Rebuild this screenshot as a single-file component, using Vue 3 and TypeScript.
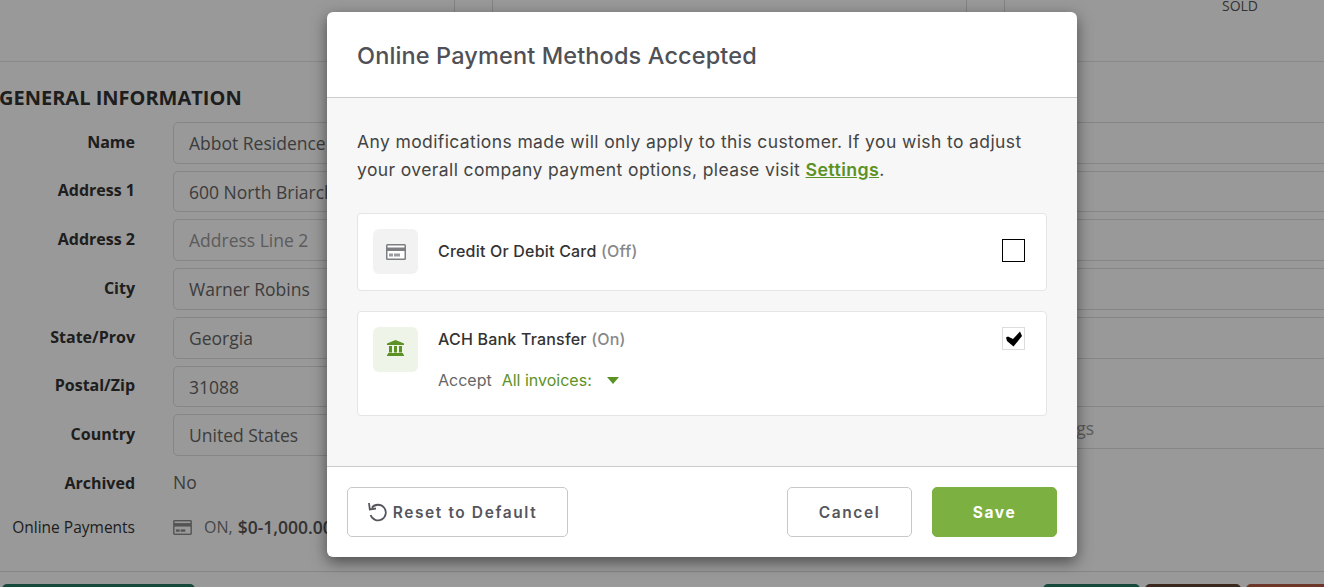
<script setup lang="ts">
const leftRows: { label: string; value: string; placeholder?: boolean }[] = [
  { label: 'Name', value: 'Abbot Residence' },
  { label: 'Address 1', value: '600 North Briarcliff Road' },
  { label: 'Address 2', value: 'Address Line 2', placeholder: true },
  { label: 'City', value: 'Warner Robins' },
  { label: 'State/Prov', value: 'Georgia' },
  { label: 'Postal/Zip', value: '31088' },
  { label: 'Country', value: 'United States' },
]
</script>

<template>
  <div class="page">
    <div class="topbar">
      <div class="cell c1"></div>
      <div class="cell c2"></div>
      <div class="cell c3"></div>
      <div class="cell c4"></div>
      <div class="sold">SOLD</div>
    </div>

    <div class="content">
      <section class="left">
        <h2 class="section-title">GENERAL INFORMATION</h2>
        <div v-for="row in leftRows" :key="row.label" class="form-row">
          <label class="form-label">{{ row.label }}</label>
          <div class="field" :class="{ ph: row.placeholder }">{{ row.value }}</div>
        </div>
        <div class="form-row plain archived">
          <label class="form-label">Archived</label>
          <div class="plain-value">No</div>
        </div>
        <div class="form-row plain payments">
          <label class="form-label light">Online Payments</label>
          <div class="pay-value">
            <svg class="pay-icon" viewBox="0 0 20 16" width="19" height="15">
              <rect width="20" height="16" rx="1.500" fill="#8c8c8c" />
              <rect x="1.500" y="1.500" width="17" height="1.800" fill="#fff" />
              <rect x="1.500" y="7" width="17" height="7.500" fill="#fff" />
              <rect x="3" y="10" width="4" height="2.500" fill="#8c8c8c" />
              <rect x="8" y="10" width="5" height="2.500" fill="#8c8c8c" />
            </svg>
            <span class="on">ON,</span>
            <span class="range">$0-1,000.00</span>
          </div>
        </div>
      </section>

      <section class="right">
        <div class="field wide"></div>
        <div class="field wide"></div>
        <div class="field wide"></div>
        <div class="field wide"></div>
        <div class="field wide"></div>
        <div class="field wide tags">Tags</div>
      </section>
    </div>

    <div class="actions">
      <div class="act green-dark"></div>
      <div class="act-spacer"></div>
      <div class="act green"></div>
      <div class="act brown"></div>
      <div class="act red"></div>
    </div>

    <div class="overlay"></div>

    <div class="modal" role="dialog">
      <header class="modal-head">
        <h3 class="modal-title">Online Payment Methods Accepted</h3>
      </header>
      <div class="modal-body">
        <p class="intro">
          Any modifications made will only apply to this customer. If you wish to adjust your overall company payment options, please visit
          <a class="link">Settings</a>.
        </p>

        <div class="method">
          <div class="method-icon grey">
            <svg viewBox="0 0 20 16" width="20" height="16">
              <rect width="20" height="16" rx="1.500" fill="#7d7e82" />
              <rect x="1.500" y="1.500" width="17" height="2" fill="#fff" />
              <rect x="1.500" y="7" width="17" height="7.500" fill="#fff" />
              <rect x="3" y="9.500" width="4" height="3" fill="#9a9b9e" />
              <rect x="8" y="9.500" width="6" height="3" fill="#9a9b9e" />
            </svg>
          </div>
          <div class="method-main">
            <div class="method-title">Credit Or Debit Card <span class="state">(Off)</span></div>
          </div>
          <span class="check off"></span>
        </div>

        <div class="method second">
          <div class="method-icon pale">
            <svg class="bank" viewBox="0 0 17 16" width="17" height="16">
              <path fill="#5c9225" d="M8.500 0 17 3.500V5H0V3.500zM2 6h3v6.500H2zM7 6h3v6.500H7zM12 6h3v6.500h-3zM1 13h15v1.500H1zM0 14.500h17V16H0z" />
            </svg>
          </div>
          <div class="method-main">
            <div class="method-title">ACH Bank Transfer <span class="state">(On)</span></div>
            <div class="accept">
              <span class="accept-label">Accept</span>
              <span class="accept-value">All invoices:</span>
              <span class="caret"></span>
            </div>
          </div>
          <span class="check on-box">
            <svg viewBox="0 0 16 16" width="16" height="16">
              <path fill="#000" d="M0 6.500 2 5.500 7 8 14 0.500 16 5 7.500 15.500 1 10z" />
            </svg>
          </span>
        </div>
      </div>
      <footer class="modal-foot">
        <button class="btn reset" type="button">
          <svg viewBox="0 0 20 20" width="20" height="20" fill="none" stroke="#55565c" stroke-width="1.800">
            <path d="M3.900 5.700A7.800 7.800 0 1 1 2.600 13" />
            <path d="M1 1 1.800 7.500 8 6.500" />
          </svg>
          Reset to Default
        </button>
        <div class="foot-right">
          <button class="btn cancel" type="button">Cancel</button>
          <button class="btn save" type="button">Save</button>
        </div>
      </footer>
    </div>
  </div>
</template>

<style scoped>
.page {
  position: relative;
  width: 1324px;
  height: 587px;
  overflow: hidden;
  background: #fff;
  font-family: "Open Sans", sans-serif;
  color: #333;
}
.topbar {
  display: flex;
  height: 61px;
  border-bottom: 1px solid #e4e4e4;
  box-sizing: content-box;
}
.cell { border-right: 1px solid #ddd; }
.c1 { width: 454px; }
.c2 { width: 37px; }
.c3 { width: 473px; }
.c4 { width: 37px; }
.sold {
  margin-left: 217px;
  font-size: 14px;
  line-height: 12px;
  height: 12px;
  color: #555;
}
.content {
  display: flex;
  height: 509px;
  border-bottom: 1px solid #e0e0e0;
}
.left { width: 1000px; flex: none; }
.section-title {
  margin: 0 0 0 -1px;
  padding-top: 21px;
  height: 59.900px;
  box-sizing: border-box;
  font-size: 20px;
  line-height: 30px;
  font-weight: 700;
  color: #333;
}
.form-row {
  display: flex;
  align-items: center;
  height: 41.750px;
  margin-bottom: 7px;
}
.form-label {
  width: 135px;
  flex: none;
  text-align: right;
  font-size: 16px;
  font-weight: 700;
  color: #333;
  margin-top: -2.500px;
}
.field {
  box-sizing: border-box;
  height: 100%;
  border: 1px solid #e0e0e0;
  border-radius: 5px;
  margin-left: 38px;
  padding-left: 15px;
  width: 400px;
  font-size: 17.500px;
  line-height: 41.300px;
  color: #666;
  white-space: nowrap;
}
.field.ph { color: #999; }
.plain { height: 40px; }
.archived { margin-bottom: 4px; }
.archived .form-label { margin-top: -0.500px; }
.plain-value {
  margin-left: 38px;
  font-size: 17.500px;
  color: #666;
  margin-top: -3px;
}
.form-label.light { font-size: 15.500px; font-weight: 500; margin-top: -1px; }
.pay-value {
  display: flex;
  align-items: center;
  margin-left: 38px;
  font-size: 16px;
  color: #555;
}
.pay-icon { margin-right: 12px; }
.on { color: #777; margin-right: 5px; }
.range { font-size: 17.500px; font-weight: 600; white-space: nowrap; }
.right { width: 400px; flex: none; padding-top: 59.900px; }
.field.wide { margin: 0 0 7px; height: 41.750px; width: 400px; }
.field.tags {
  margin-top: 47.500px;
  height: 42.500px;
  line-height: 42px;
  padding-left: 56px;
  color: #999;
}
.actions {
  display: flex;
  padding: 12px 0 0 2px;
  gap: 5px;
}
.act { height: 40px; border-radius: 5px 5px 0 0; flex: none; }
.act-spacer { width: 838px; flex: none; }
.green-dark { width: 193px; background: #257b64; }
.green { width: 97px; background: #257b64; }
.brown { width: 96px; background: #614335; }
.red { width: 90px; background: #b45d43; }
.overlay {
  position: absolute;
  inset: 0;
  background: rgba(0, 0, 0, 0.4);
}
.modal {
  position: absolute;
  left: 327px;
  top: 12px;
  width: 750px;
  height: 545px;
  display: flex;
  flex-direction: column;
  background: #fff;
  border-radius: 6px;
  box-shadow: 0 5px 15px rgba(0, 0, 0, 0.5);
  font-family: Inter, sans-serif;
  overflow: hidden;
}
.modal-head {
  height: 86px;
  flex: none;
  box-sizing: border-box;
  border-bottom: 1px solid #ccc;
  padding: 2px 30px 0;
  display: flex;
  align-items: center;
}
.modal-title {
  margin: 0;
  font-size: 23.500px;
  font-weight: 500;
  letter-spacing: 0.130px;
  color: #4f5157;
}
.modal-body {
  flex: 1;
  background: #f7f7f7;
  padding: 30px 30px 0;
  box-sizing: border-box;
}
.intro {
  margin: 0 0 29px;
  font-size: 17.500px;
  letter-spacing: 0.390px;
  line-height: 28px;
  color: #444;
}
.link {
  color: #5c9225;
  font-weight: 600;
  font-size: 17.800px;
  text-decoration: underline;
}
.method {
  display: flex;
  align-items: flex-start;
  background: #fff;
  border: 1px solid #e5e5e5;
  border-radius: 4px;
  padding: 15px;
  height: 78px;
  box-sizing: border-box;
}
.method.second {
  height: 105px;
  margin-top: 20px;
}
.method-icon {
  width: 45px;
  height: 45px;
  flex: none;
  border-radius: 6px;
  display: flex;
  align-items: center;
  justify-content: center;
}
.bank { margin-bottom: 3px; }
.grey { background: #f2f2f2; }
.pale { background: #eef4e8; }
.method-main { flex: 1; margin-left: 20px; }
.method-title {
  font-size: 16px;
  font-weight: 500;
  letter-spacing: 0.200px;
  color: #333;
  line-height: 45px;
}
.second .method-title { line-height: 24px; }
.state { color: #888; font-weight: 500; }
.accept {
  display: flex;
  align-items: center;
  margin-top: 17px;
  font-size: 16px;
  line-height: 24px;
}
.accept-label { color: #666; margin-right: 10px; }
.accept-value { color: #5c9225; }
.caret {
  margin-left: 15px;
  border-left: 6px solid transparent;
  border-right: 6px solid transparent;
  border-top: 7px solid #5c9225;
}
.check {
  box-sizing: border-box;
  width: 23px;
  height: 23px;
  flex: none;
  margin: 10px 6px 0 0;
  background: #fff;
}
.check.off { border: 1.500px solid #000; }
.check.on-box {
  margin-top: 0;
  border: 1px solid #ddd;
  display: flex;
  align-items: center;
  justify-content: center;
}
.modal-foot {
  height: 91px;
  flex: none;
  box-sizing: border-box;
  border-top: 1px solid #ccc;
  padding: 20px 20px 0;
  display: flex;
  justify-content: space-between;
  align-items: flex-start;
}
.foot-right { display: flex; gap: 20px; }
.btn {
  height: 50px;
  border-radius: 5px;
  border: 1px solid #c8c8c8;
  background: #fff;
  font-family: inherit;
  font-size: 15.500px;
  font-weight: 600;
  letter-spacing: 1.600px;
  color: #55565c;
  display: flex;
  align-items: center;
  justify-content: center;
  gap: 5px;
  padding: 0;
}
.reset { width: 221px; padding-right: 10px; }
.cancel { width: 125px; }
.save { width: 125px; background: #7cb041; border-color: #7cb041; color: #fff; font-weight: 700; }
</style>

<style>
html, body { margin: 0; padding: 0; overflow: hidden; }
</style>
